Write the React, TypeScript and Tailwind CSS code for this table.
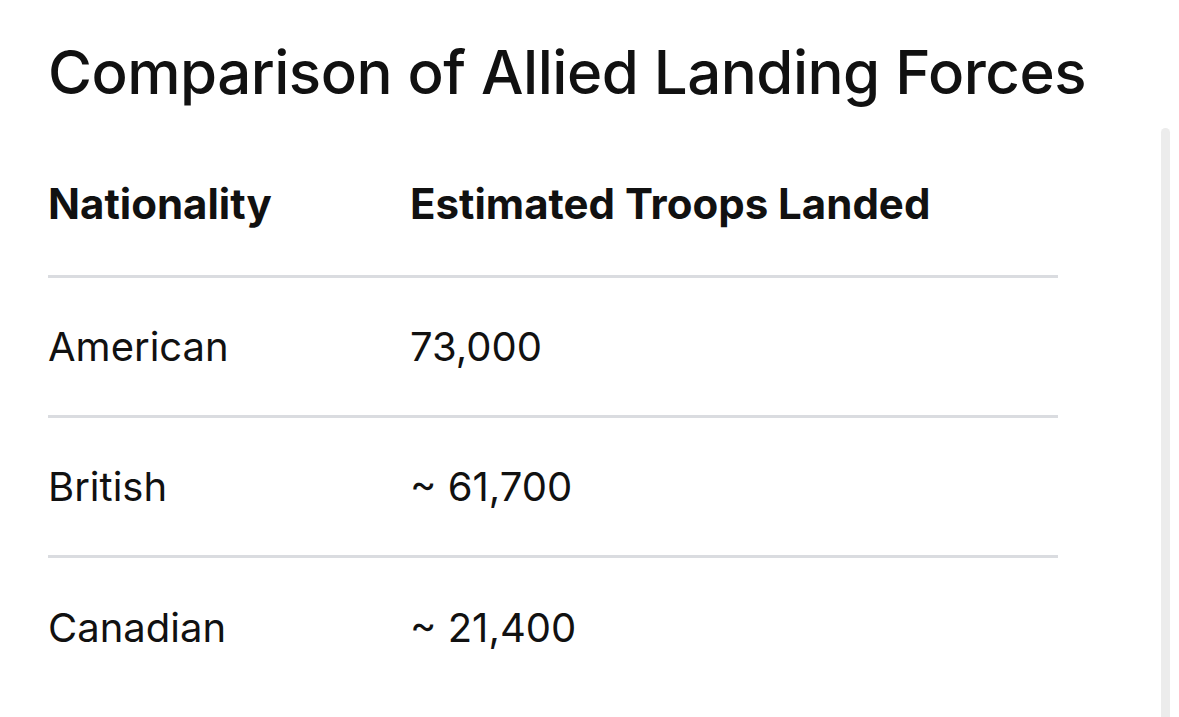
import React from "react";

const rows = [
  ["American", "73,000"],
  ["British", "~ 61,700"],
  ["Canadian", "~ 21,400"],
];

export default function App() {
  return (
    <div
      className="relative w-[1179px] h-[717px] overflow-hidden bg-white text-[#111]"
      style={{ fontFamily: "Inter, 'Open Sans', sans-serif" }}
    >
      <div className="pl-[48px] pt-[36px]">
        <h1 className="text-[60px] leading-[72px] font-medium tracking-[-0.5px]">
          Comparison of Allied Landing Forces
        </h1>
        <div className="mt-[30px] w-[1010px]">
          <div className="flex h-[140px] items-center border-b-[3px] border-[#dadce0] pb-[6px] text-[42px] font-bold">
            <div className="w-[362px]">Nationality</div>
            <div>Estimated Troops Landed</div>
          </div>
          {rows.map(([a, b], i) => (
            <div
              key={a}
              className={
                "flex h-[140px] items-center text-[40px] " +
                (i < rows.length - 1 ? "border-b-[3px] border-[#dadce0]" : "")
              }
            >
              <div className="w-[362px]">{a}</div>
              <div>{b}</div>
            </div>
          ))}
        </div>
      </div>
      <div className="absolute left-[1161px] top-[128px] h-[600px] w-[9px] rounded-t-full bg-[#ececec]" />
    </div>
  );
}
